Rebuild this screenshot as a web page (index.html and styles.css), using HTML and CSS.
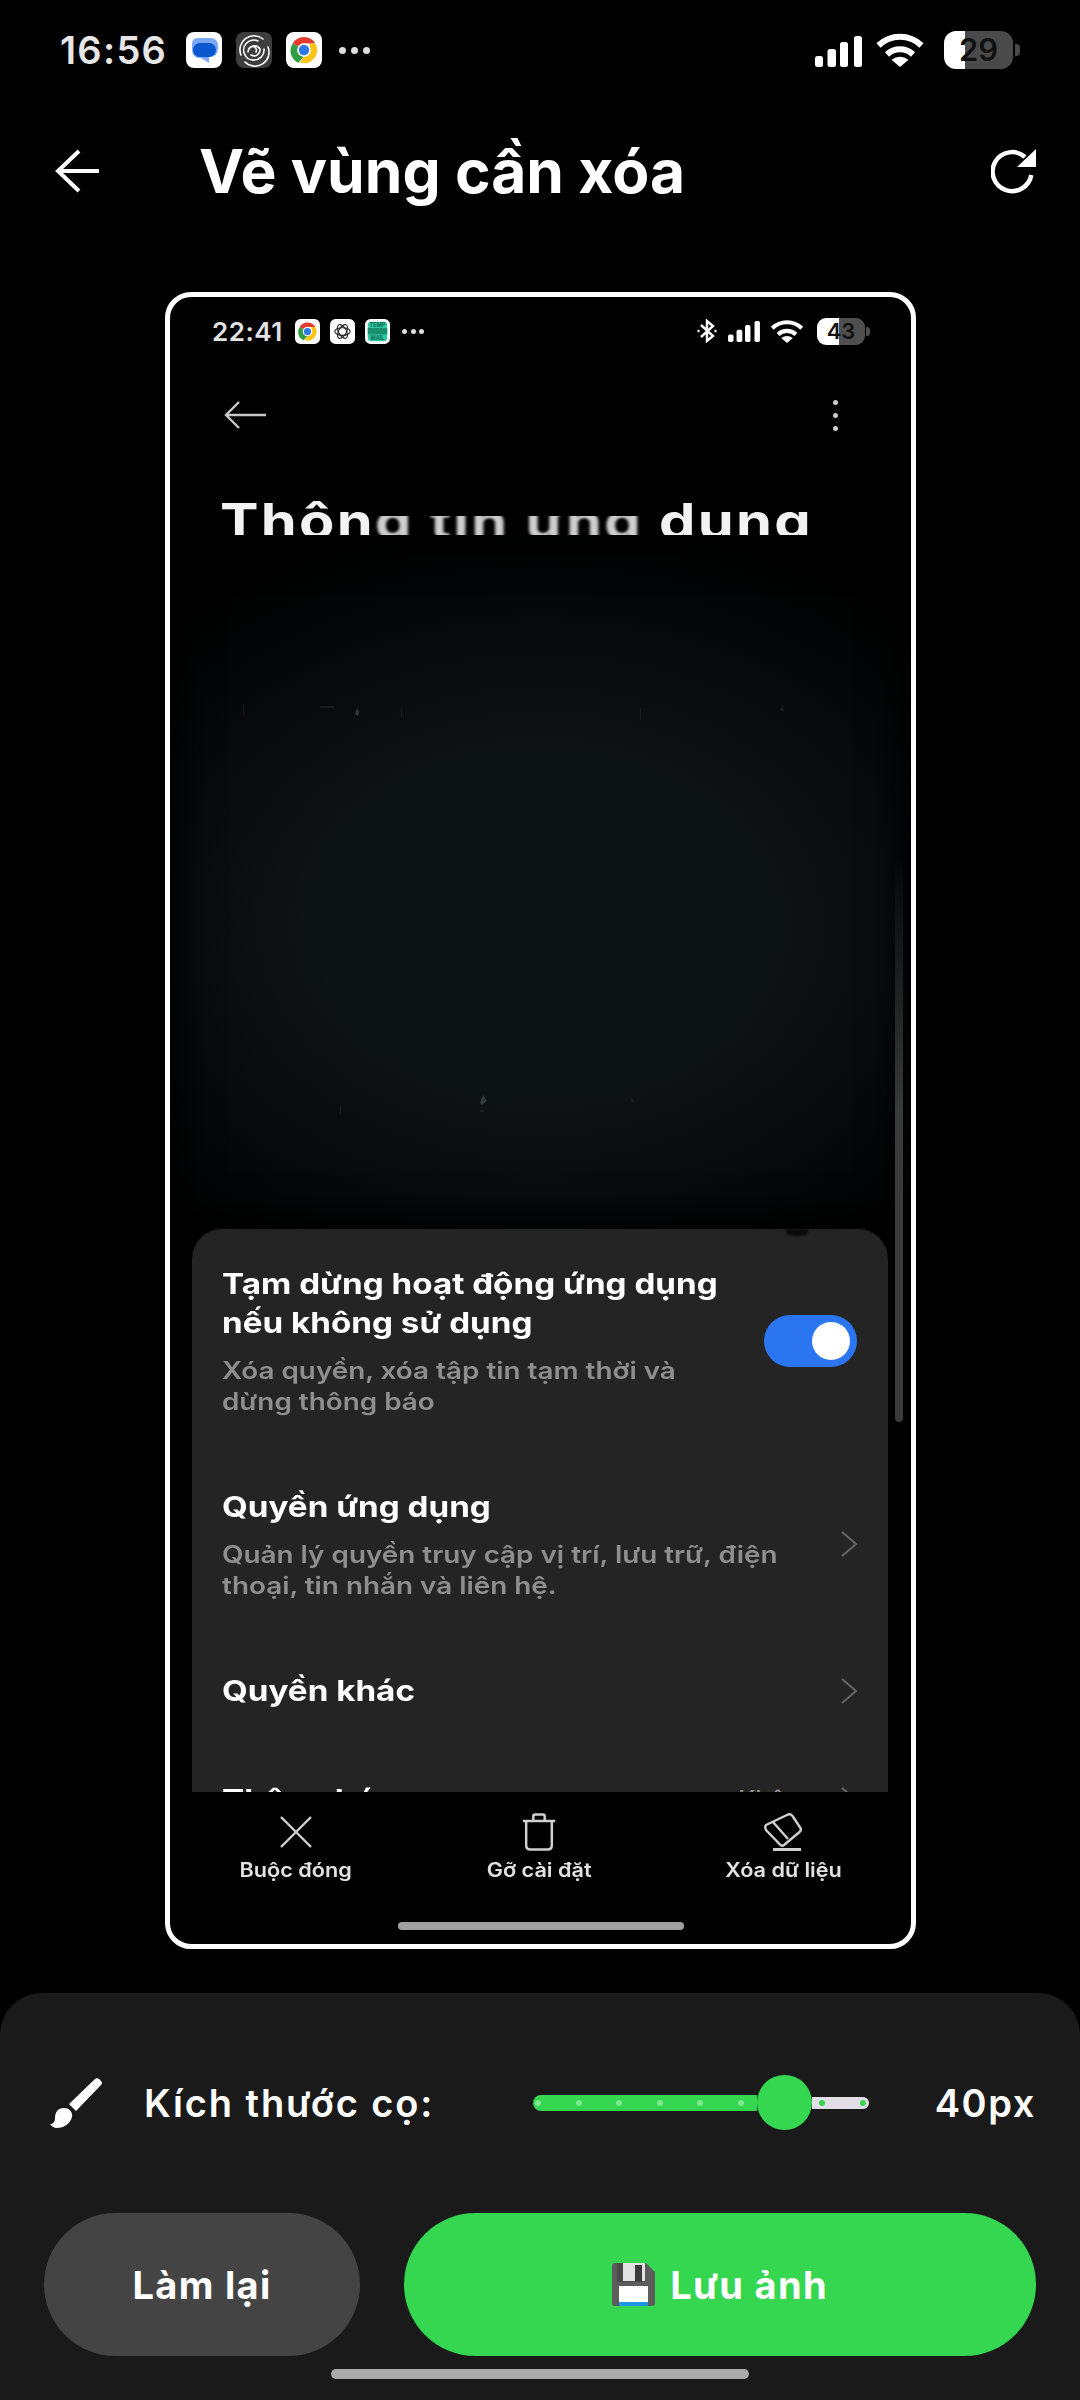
FILE: index.html
```html
<!DOCTYPE html>
<html lang="vi">
<head>
<meta charset="utf-8">
<title>Vẽ vùng cần xóa</title>
<link rel="stylesheet" href="styles.css">
</head>
<body>
<svg class="defs" width="0" height="0">
  <symbol id="chrome" viewBox="0 0 36 36">
    <path d="M18 5A13 13 0 0 1 29.3 11.5H18A6.5 6.5 0 0 0 12.4 14.8L6.7 11.5A13 13 0 0 1 18 5Z" fill="#e33b2e"/>
    <path d="M6.7 11.5L12.4 14.8A6.5 6.5 0 0 0 18 24.5L12.4 30.7A13 13 0 0 1 6.7 11.5Z" fill="#2f9e44"/>
    <path d="M29.3 11.5A13 13 0 0 1 14 30.4L18 24.5A6.5 6.5 0 0 0 23.6 14.8V11.5Z" fill="#fcc419"/>
    <circle cx="18" cy="18" r="6.8" fill="#fff"/>
    <circle cx="18" cy="18" r="5.2" fill="#2f78e6"/>
  </symbol>
  <symbol id="signal" viewBox="0 0 47 31">
    <rect x="0" y="20" width="8" height="11" rx="2.5"/>
    <rect x="12.500" y="13" width="8.500" height="18" rx="2.500"/>
    <rect x="25" y="6" width="8" height="25" rx="2.500"/>
    <rect x="39" y="0" width="8" height="31" rx="2.500"/>
  </symbol>
  <symbol id="wifi" viewBox="0 0 48 35">
    <path d="M2.500 13.500A31 31 0 0 1 45.500 13.500" fill="none" stroke="currentColor" stroke-width="6"/>
    <path d="M11 22.500A19 19 0 0 1 37 22.500" fill="none" stroke="currentColor" stroke-width="6"/>
    <path d="M24 35L15.500 27.800Q24 21.500 32.500 27.800Z"/>
  </symbol>
</svg>

<header class="status">
  <div class="status-left">
    <span class="time">16:56</span>
    <svg class="app" viewBox="0 0 36 36"><rect width="36" height="36" rx="8" fill="#fff"/><path d="M12 6H24Q32 6 32 14V16Q32 25 23 25V31L15 26H12Q6 25 6 17V12Q6 6 12 6Z" fill="#7aa7f7"/><rect x="7" y="11" width="23" height="14" rx="7" fill="#0b57d0"/></svg>
    <svg class="app" viewBox="0 0 36 36"><rect width="36" height="36" rx="8" fill="#3d3d3d"/><g fill="none" stroke="#fff" stroke-width="1.600" stroke-linecap="round"><path d="M27 7A14 14 0 0 0 5 23"/><path d="M9 30A14 14 0 0 0 32 15"/><path d="M22 9A10 10 0 0 0 9 23A9 9 0 0 0 17 28"/><path d="M28 17A10 10 0 0 1 17 28"/><path d="M12 20A6.500 6.500 0 0 1 24 17A6 6 0 0 1 15 23"/><path d="M18 15A3.500 3.500 0 0 1 20 20"/></g></svg>
    <svg class="app" viewBox="0 0 36 36"><rect width="36" height="36" rx="8" fill="#fff"/><use href="#chrome"/></svg>
    <span class="more"><i></i><i></i><i></i></span>
  </div>
  <div class="status-right">
    <svg class="sig"><use href="#signal"/></svg>
    <svg class="wifi"><use href="#wifi"/></svg>
    <span class="batt">29</span><span class="nub"></span>
  </div>
</header>

<nav class="head">
  <svg class="back" viewBox="0 0 44 44" fill="none" stroke="#fff" stroke-width="4"><path d="M44 22H4M24 2L3 22L24 42"/></svg>
  <h1 class="head-title">Vẽ vùng cần xóa</h1>
  <svg class="reload" viewBox="0 0 46 46"><path d="M34 9A19.500 19.500 0 1 0 40.300 27" fill="none" stroke="#fff" stroke-width="4.500"/><path d="M45 1V19H26Z" fill="#fff"/></svg>
</nav>

<main class="frame">
  <div class="shot-status">
    <div class="status-left">
      <span class="shot-time">22:41</span>
      <svg class="shot-app" viewBox="0 0 36 36"><rect width="36" height="36" rx="8" fill="#fff"/><use href="#chrome"/></svg>
      <svg class="shot-app" viewBox="0 0 36 36"><rect width="36" height="36" rx="8" fill="#fff"/><g fill="none" stroke="#222" stroke-width="1.600"><ellipse cx="18" cy="18" rx="11" ry="5.500"/><ellipse cx="18" cy="18" rx="11" ry="5.500" transform="rotate(60 18 18)"/><ellipse cx="18" cy="18" rx="11" ry="5.500" transform="rotate(120 18 18)"/></g></svg>
      <svg class="shot-app" viewBox="0 0 36 36"><rect width="36" height="36" rx="8" fill="#fff"/><rect x="4" y="4" width="28" height="28" rx="5" fill="#2fc9a2"/><rect x="4" y="13" width="28" height="9" fill="#178f6d"/><text class="tm" x="18" y="12" text-anchor="middle">TEMP</text><text class="tm" x="18" y="30" text-anchor="middle">MAIL</text></svg>
      <span class="shot-more"><i></i><i></i><i></i></span>
    </div>
    <div class="status-right">
      <svg class="bt" viewBox="0 0 20 24" fill="none" stroke="#fff" stroke-width="2.400"><path d="M4 6L16 17L10 22V2L16 7L4 18"/><path d="M0.500 12H2.500M17.500 12H19.500"/></svg>
      <svg class="shot-sig"><use href="#signal"/></svg>
      <svg class="shot-wifi"><use href="#wifi"/></svg>
      <span class="shot-batt">43</span><span class="shot-nub"></span>
    </div>
  </div>

  <div class="shot-nav">
    <svg class="shot-back" viewBox="0 0 42 28" fill="none" stroke="#c8c8c8" stroke-width="2.400"><path d="M42 14H2M15 1L2 14L15 27"/></svg>
    <span class="kebab"><i></i><i></i><i></i></span>
  </div>

  <div class="shot-title"><span>Thôn</span><span class="erased">g tin ứng </span><span>dụng</span></div>

  <div class="erased-area">
    <svg class="specks" viewBox="0 0 741 693" preserveAspectRatio="none" fill="#34393b"><path d="M187 172l2 4-1 4-3-2zM313 559l4 6-5 4-2-2z"/><path d="M73 168h1v12h-1zM150 170h14v2h-14zM231 172h1v10h-1zM470 172h1v12h-1zM610 174l3-6 1 8zM170 570h1v8h-1zM310 574h4v2h-4zM460 562h3l2 4h-4z" fill="#171c1e"/></svg>
  </div>

  <section class="card">
    <span class="blot"></span>
    <div class="row">
      <div class="row-text">
        <div class="row-title">Tạm dừng hoạt động ứng dụng<br>nếu không sử dụng</div>
        <div class="row-sub">Xóa quyền, xóa tập tin tạm thời và<br>dừng thông báo</div>
      </div>
      <span class="toggle"><span class="knob"></span></span>
    </div>
    <div class="row">
      <div class="row-text">
        <div class="row-title">Quyền ứng dụng</div>
        <div class="row-sub">Quản lý quyền truy cập vị trí, lưu trữ, điện<br>thoại, tin nhắn và liên hệ.</div>
      </div>
      <svg class="chev" viewBox="0 0 16 26" fill="none" stroke="#666" stroke-width="2"><path d="M1 1L15 13L1 25"/></svg>
    </div>
    <div class="row">
      <div class="row-text"><div class="row-title">Quyền khác</div></div>
      <svg class="chev" viewBox="0 0 16 26" fill="none" stroke="#666" stroke-width="2"><path d="M1 1L15 13L1 25"/></svg>
    </div>
    <div class="row row-cut">
      <div class="row-text"><div class="row-title">Thông báo</div></div>
      <span class="row-val">Không</span>
      <svg class="chev" viewBox="0 0 16 26" fill="none" stroke="#666" stroke-width="2"><path d="M1 1L15 13L1 25"/></svg>
    </div>
  </section>

  <div class="actions">
    <div class="action">
      <svg class="act-icon" viewBox="0 0 38 38" fill="none" stroke="#d0d0d0" stroke-width="2.400"><path d="M4 4L34 34M34 4L4 34"/></svg>
      <span class="act-label">Buộc đóng</span>
    </div>
    <div class="action">
      <svg class="act-icon" viewBox="0 0 40 40" fill="none" stroke="#d0d0d0" stroke-width="2.600"><path d="M3 8.500H37M14 8V3.500Q14 1.500 16 1.500H24Q26 1.500 26 3.500V8M6.500 9V34Q6.500 38.500 11 38.500H29Q33.500 38.500 33.500 34V9"/></svg>
      <span class="act-label">Gỡ cài đặt</span>
    </div>
    <div class="action">
      <svg class="act-icon" viewBox="0 0 38 38" fill="none" stroke="#d0d0d0" stroke-width="2.400"><path d="M2 12L24 1.500Q27 0.500 28.500 3L36.500 15Q37.500 17.500 35.500 19L20 32Q18 33.500 16 31.500L2 17Q0.500 14 2 12Z"/><path d="M9 9L24 26"/><path d="M9 36.500H37" stroke-width="3"/></svg>
      <span class="act-label">Xóa dữ liệu</span>
    </div>
  </div>
  <div class="shot-home"></div>
  <span class="scrollbar"></span>
</main>

<footer class="panel">
  <div class="brush-row">
    <svg class="brush" viewBox="0 0 52 50" fill="#fff"><path d="M45 1Q47 -0.500 49 1L51 3Q53 5 51 7L26 33L19 26Z"/><path d="M14 30C20 30 23 35 22 39C20 47 12 50 7 50C4 50 1 48 0 46C3 46 5 44 5 40C5 34 8 30 14 30Z"/></svg>
    <span class="brush-label">Kích thước cọ:</span>
    <div class="slider">
      <div class="track-on"><i></i><i></i><i></i><i></i><i></i><i></i></div>
      <div class="thumb"></div>
      <div class="track-off"><i></i><i></i></div>
    </div>
    <span class="brush-val">40px</span>
  </div>
  <div class="buttons">
    <button class="btn btn-reset">Làm lại</button>
    <button class="btn btn-save">
      <svg class="floppy" viewBox="0 0 43 43"><path d="M3 0H34L43 9V40Q43 43 40 43H3Q0 43 0 40V3Q0 0 3 0Z" fill="#5c5c5c"/><rect x="5" y="0" width="28" height="19" fill="#4a4a4a"/><rect x="11" y="0" width="22" height="18" fill="#e2e2e2"/><rect x="23" y="2" width="7" height="16" fill="#3a3a3a"/><rect x="7" y="23" width="29" height="20" fill="#fff"/><rect x="7" y="39" width="29" height="4" fill="#1e96e6"/></svg>
      <span>Lưu ảnh</span>
    </button>
  </div>
  <div class="home"></div>
</footer>
</body>
</html>
```

FILE: styles.css
```css
* { box-sizing: border-box; }
html, body { margin: 0; padding: 0; }
body {
  width: 1080px;
  height: 2400px;
  background: #000;
  color: #fff;
  font-family: Inter, "Liberation Sans", sans-serif;
  display: flex;
  flex-direction: column;
  overflow: hidden;
}
.defs { display: block; height: 0; }
i { display: block; }
svg { display: block; flex: none; }

/* Status bar */
.status {
  height: 100px;
  flex: none;
  padding: 0 60px;
  display: flex;
  align-items: center;
  justify-content: space-between;
}
.status-left, .status-right { display: flex; align-items: center; }
.time {
  font-size: 38px;
  font-weight: 600;
  color: #e6e6e6;
  letter-spacing: 1.3px;
  width: 126px;
}
.app { width: 36px; height: 36px; margin-right: 14px; }
.more { display: flex; gap: 5px; margin-left: 3px; }
.more i { width: 7px; height: 7px; border-radius: 50%; background: #ddd; }
.sig { width: 47px; height: 31px; fill: #fff; margin: 3px 14px 0 0; }
.wifi { width: 48px; height: 35px; color: #fff; fill: #fff; margin: -2px 20px 0 0; }
.batt {
  width: 69px;
  height: 38px;
  border-radius: 12px;
  background: linear-gradient(90deg, #fff 21px, #4a4a4a 21px);
  color: #111;
  font-size: 31px;
  font-weight: 600;
  line-height: 38px;
  text-align: center;
}
.nub { width: 5px; height: 12px; margin-left: 2px; border-radius: 0 4px 4px 0; background: #4a4a4a; }

/* Header */
.head {
  flex: none;
  height: 86px;
  margin-top: 28px;
  padding: 0 43px 0 55px;
  display: flex;
  align-items: center;
}
.back { width: 44px; height: 44px; }
.head-title {
  flex: 1;
  margin: 0 0 0 100px;
  font-size: 60.5px;
  font-weight: 700;
  line-height: 86px;
}
.reload { width: 46px; height: 46px; }

/* Framed screenshot */
.frame {
  position: relative;
  flex: none;
  width: 751px;
  height: 1657px;
  margin: 78px 0 0 165px;
  border: 5px solid #fff;
  border-radius: 26px;
  display: flex;
  flex-direction: column;
  overflow: hidden;
  background: #000;
}
.shot-status {
  flex: none;
  height: 68px;
  padding: 0 41px 0 42px;
  display: flex;
  align-items: center;
  justify-content: space-between;
}
.shot-time {
  width: 83px;
  font-size: 26px;
  font-weight: 600;
  color: #e2e2e2;
  letter-spacing: 0.5px;
}
.shot-app { width: 25px; height: 25px; margin-right: 10px; }
.tm { font: 700 8px Inter, sans-serif; fill: #0b6b50; }
.shot-more { display: flex; gap: 3.5px; margin-left: 2px; }
.shot-more i { width: 5px; height: 5px; border-radius: 50%; background: #ddd; }
.bt { width: 20px; height: 24px; margin-right: 11px; }
.shot-sig { width: 32px; height: 21px; fill: #fff; margin-right: 10px; }
.shot-wifi { width: 34px; height: 24px; color: #fff; fill: #fff; margin-right: 13px; }
.shot-batt {
  width: 48px;
  height: 27px;
  border-radius: 9px;
  background: linear-gradient(90deg, #fff 22px, #4f4f4f 22px);
  color: #111;
  font-size: 22px;
  font-weight: 600;
  line-height: 27px;
  text-align: center;
}
.shot-nub { width: 4px; height: 9px; margin-left: 1px; border-radius: 0 3px 3px 0; background: #4f4f4f; }

.shot-nav {
  flex: none;
  height: 100px;
  padding: 0 73px 0 54px;
  display: flex;
  align-items: center;
  justify-content: space-between;
}
.shot-back { width: 42px; height: 28px; }
.kebab { display: flex; flex-direction: column; gap: 8px; }
.kebab i { width: 5px; height: 5px; border-radius: 50%; background: #ccc; }

.shot-title {
  flex: none;
  height: 37px;
  margin: 33px 0 1px 50px;
  overflow: hidden;
  white-space: nowrap;
  font-size: 50px;
  font-weight: 700;
  color: #f2f2f2;
  letter-spacing: 2px;
  display: flex;
  transform: scaleX(1.155);
  transform-origin: 0 50%;
}
.shot-title span { display: block; white-space: pre; line-height: 33px; padding-top: 7px; }
.shot-title .erased {
  clip-path: inset(18px 0 0 0);
  filter: blur(1.2px);
  opacity: .85;
}

.erased-area {
  flex: 1;
  min-height: 0;
  background: radial-gradient(ellipse 75% 60% at 50% 56%, #0e1315 40%, #000 100%);
  box-shadow: inset 0 0 40px 10px #000;
}
.specks { width: 100%; height: 100%; }

.card {
  position: relative;
  flex: none;
  height: 563px;
  margin: 0 23px 0 22px;
  padding: 35px 30px 0;
  background: #242424;
  border-radius: 30px 30px 0 0;
  overflow: hidden;
}
.blot {
  position: absolute;
  top: 0;
  right: 80px;
  width: 22px;
  height: 7px;
  border-radius: 0 0 50% 50%;
  background: #0a0a0a;
  filter: blur(1px);
}
.row { display: flex; align-items: center; }
.row + .row { margin-top: 70px; }
.row-text { flex: 1; min-width: 0; }
.row-title {
  font-size: 29px;
  font-weight: 700;
  line-height: 39px;
  color: #fff;
  white-space: nowrap;
  transform: scaleX(1.145);
  transform-origin: 0 50%;
}
.row-sub {
  margin-top: 13px;
  font-size: 24px;
  font-weight: 600;
  line-height: 31px;
  color: #8e8e8e;
  white-space: nowrap;
  transform: scaleX(1.16);
  transform-origin: 0 50%;
}
.toggle {
  flex: none;
  width: 93px;
  height: 52px;
  padding: 7px;
  border-radius: 26px;
  background: #2b76f0;
  display: flex;
  justify-content: flex-end;
  margin-right: 1px;
}
.knob { width: 38px; height: 38px; border-radius: 50%; background: #fff; }
.chev { width: 16px; height: 26px; margin-right: 1px; }
.row-val { font-size: 25px; font-weight: 500; color: #8e8e8e; margin-right: 25px; }

.actions {
  flex: none;
  height: 130px;
  padding: 21px 6px 0 4px;
  display: grid;
  grid-template-columns: repeat(3, 1fr);
  background: #000;
}
.action {
  display: flex;
  flex-direction: column;
  align-items: center;
  font-size: 19.5px;
  font-weight: 600;
  color: #e2e2e2;
}
.act-label { display: block; transform: scaleX(1.11); }
.act-icon { width: 38px; height: 38px; margin-bottom: 7px; }
.shot-home {
  flex: none;
  width: 286px;
  height: 8px;
  margin: 0 auto 14px;
  border-radius: 4px;
  background: #a0a0a0;
}
.scrollbar {
  position: absolute;
  top: 563px;
  right: 8px;
  width: 8px;
  height: 562px;
  border-radius: 0 0 4px 4px;
  background: linear-gradient(rgba(58,58,58,0), #3a3a3a 45%);
}

/* Bottom panel */
.panel {
  flex: none;
  height: 407px;
  margin-top: 44px;
  padding: 82px 44px 0;
  background: #1a1a1a;
  border-radius: 42px 42px 0 0;
}
.brush-row {
  height: 55px;
  padding: 0 0 0 6px;
  display: flex;
  align-items: center;
}
.brush { width: 52px; height: 50px; margin-right: 42px; }
.brush-label {
  width: 388.5px;
  font-size: 38px;
  font-weight: 600;
  letter-spacing: 1.9px;
}
.slider { width: 336.5px; display: flex; align-items: center; flex: none; }
.track-on {
  width: 224.5px;
  height: 16px;
  padding-left: 2.5px;
  border-radius: 8px 0 0 8px;
  background: #34d74f;
  display: flex;
  align-items: center;
  gap: 34.5px;
}
.track-on i { width: 6px; height: 6px; border-radius: 50%; background: #7ce98d; flex: none; }
.thumb { width: 55px; height: 55px; border-radius: 50%; background: #34d74f; flex: none; }
.track-off {
  width: 57px;
  height: 12px;
  padding-left: 7px;
  border-radius: 0 6px 6px 0;
  background: #e1dee5;
  display: flex;
  align-items: center;
  gap: 35px;
}
.track-off i { width: 6px; height: 6px; border-radius: 50%; background: #34d74f; flex: none; }
.brush-val {
  flex: 1;
  text-align: right;
  font-size: 38px;
  font-weight: 600;
  letter-spacing: 1.6px;
}
.buttons { display: flex; gap: 44px; margin-top: 83px; }
.btn {
  height: 143px;
  border: 0;
  border-radius: 72px;
  color: #fff;
  font-family: inherit;
  font-size: 38px;
  font-weight: 700;
  letter-spacing: 1.3px;
  display: flex;
  align-items: center;
  justify-content: center;
}
.btn-reset { width: 316px; background: #444; }
.btn-save { width: 632px; background: #34d74f; gap: 15px; }
.floppy { width: 43px; height: 43px; }
.home {
  width: 418px;
  height: 10px;
  margin: 13px auto 0;
  border-radius: 5px;
  background: #aaa;
}
```
